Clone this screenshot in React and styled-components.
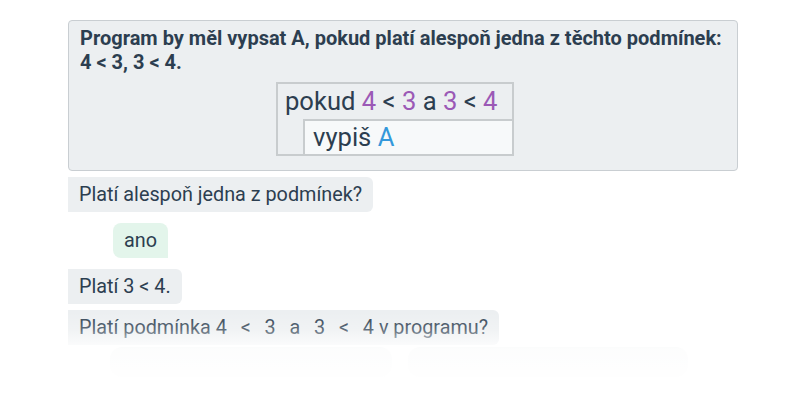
import React from "react";
import styled, { createGlobalStyle } from "styled-components";

const Global = createGlobalStyle`
  body {
    margin: 0;
    background: #ffffff;
    font-family: Roboto, "Noto Sans", sans-serif;
    color: #2c3e50;
  }
`;

const Page = styled.div`
  position: relative;
  width: 800px;
  height: 400px;
  overflow: hidden;
  padding: 20px 62px 0 68px;
  box-sizing: border-box;
`;

const Task = styled.div`
  background: #eceff1;
  border: 1px solid #c9ced2;
  border-radius: 4px;
  padding: 5px 11px 14px;
  .title {
    font-size: 20px;
    font-weight: 700;
    line-height: 24px;
    white-space: nowrap;
  }
`;

const CodeWrap = styled.div`
  display: flex;
  justify-content: center;
  padding-right: 16px;
  margin-top: 8px;
`;

const Code = styled.div`
  width: 238px;
  box-sizing: border-box;
  border: 2px solid #c8ccce;
  font-size: 25.6px;
  line-height: 35px;
  .head {
    padding: 0 0 0 7px;
  }
`;

const Body = styled.div`
  margin-left: 25px;
  border-left: 2px solid #c8ccce;
  border-top: 2px solid #c8ccce;
  background: #f7f9fa;
  padding-left: 8px;
  line-height: 33px;
`;

const Num = styled.span`
  color: ${(p) => (p.$blue ? "#3498db" : "#9b59b6")};
`;

const Chat = styled.div`
  display: flex;
  flex-direction: column;
  align-items: flex-start;
  margin-top: 6px;
`;

const Bubble = styled.div`
  height: 35px;
  line-height: 35px;
  font-size: 19.8px;
  padding: 0 11px;
  background: ${(p) => (p.$user ? "#e3f5eb" : "#eceff1")};
  border-radius: ${(p) => (p.$user ? "8px 8px 0 8px" : "0 6px 6px 0")};
  margin-left: ${(p) => (p.$user ? "45px" : "0")};
  margin-top: ${(p) => p.$gap || 0}px;
  white-space: pre;
`;

const Expr = styled.span`
  word-spacing: 2px;
`;

const Ghosts = styled.div`
  display: flex;
  gap: 16px;
  margin: 2px 0 0 42px;
`;

const Ghost = styled.div`
  width: ${(p) => p.$w}px;
  height: 30px;
  border-radius: 12px;
  background: #e6eaec;
`;

const Fade = styled.div`
  position: absolute;
  left: 0;
  right: 0;
  top: 312px;
  bottom: 0;
  background: linear-gradient(
    to bottom,
    rgba(255, 255, 255, 0) 0%,
    rgba(255, 255, 255, 0.25) 20%,
    rgba(255, 255, 255, 0.9) 42%,
    rgba(255, 255, 255, 0.97) 70%,
    #ffffff 100%
  );
  pointer-events: none;
`;

export default function App() {
  return (
    <>
      <Global />
      <Page>
        <Task>
          <div className="title">
            Program by měl vypsat A, pokud platí alespoň jedna z těchto podmínek:
            <br />4 &lt; 3, 3 &lt; 4.
          </div>
          <CodeWrap>
            <Code>
              <div className="head">
                pokud <Num>4</Num> &lt; <Num>3</Num> a <Num>3</Num> &lt; <Num>4</Num>
              </div>
              <Body>
                vypiš <Num $blue>A</Num>
              </Body>
            </Code>
          </CodeWrap>
        </Task>
        <Chat>
          <Bubble>Platí alespoň jedna z podmínek?</Bubble>
          <Bubble $user $gap={11}>ano</Bubble>
          <Bubble $gap={11}>Platí 3 &lt; 4.</Bubble>
          <Bubble $gap={6}>
            {"Platí podmínka "}
            <Expr>{"4  <  3  a  3  <  4"}</Expr>
            {" v programu?"}
          </Bubble>
          <Ghosts>
            <Ghost $w={282} />
            <Ghost $w={280} />
          </Ghosts>
        </Chat>
        <Fade />
      </Page>
    </>
  );
}
